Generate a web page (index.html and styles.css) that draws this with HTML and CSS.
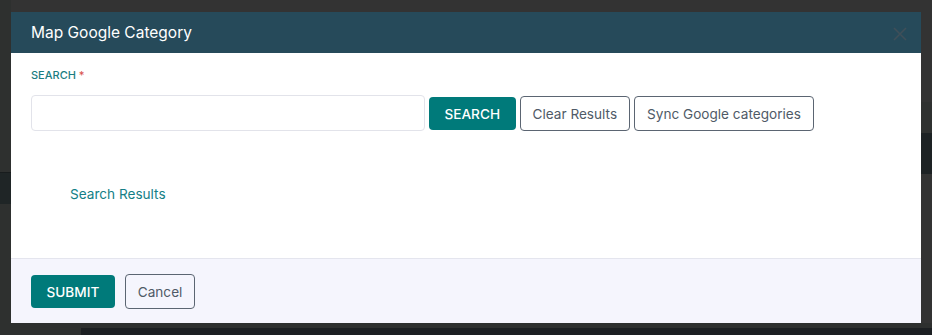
FILE: index.html
```html
<!DOCTYPE html>
<html lang="en">
<head>
  <meta charset="UTF-8" />
  <title>Map Google Category</title>
  <link rel="stylesheet" href="styles.css">
</head>
<body>

  <!-- page underneath the overlay -->
  <div class="backdrop">
    <div class="bd-left"></div>
    <div class="bd-left-band"></div>
    <div class="bd-right"></div>
    <div class="bd-right-band"></div>
    <div class="bd-bottom"></div>
    <div class="bd-bottom-dark"></div>
  </div>

  <!-- Modal -->
  <div class="modal">
    <div class="modal-header">
      <h2>Map Google Category</h2>
      <button class="close-btn" aria-label="Close">
        <svg width="14" height="14" viewBox="0 0 14 14">
          <path d="M1 1L13 13M13 1L1 13" stroke="#3f4f59" stroke-width="1.6" fill="none"/>
        </svg>
      </button>
    </div>

    <div class="modal-body">
      <label class="field-label" for="search">Search <span class="req">*</span></label>
      <div class="search-row">
        <input type="text" id="search" class="search-input">
        <button class="btn btn-primary">SEARCH</button>
        <button class="btn btn-outline">Clear Results</button>
        <button class="btn btn-outline">Sync Google categories</button>
      </div>
      <div class="results-title">Search Results</div>
    </div>

    <div class="modal-footer">
      <button class="btn btn-primary">SUBMIT</button>
      <button class="btn btn-outline">Cancel</button>
    </div>
  </div>

</body>
</html>
```

FILE: styles.css
```css
* { margin: 0; padding: 0; box-sizing: border-box; font-family: 'Inter', 'Liberation Sans', sans-serif; }

body {
  width: 932px;
  height: 335px;
  background: #333333;
  overflow: hidden;
  position: relative;
}

/* dimmed page behind the modal */
.backdrop div { position: absolute; }
.bd-left { left: 0; top: 0; width: 11px; height: 335px; background: #2e302f; }
.bd-left-band { left: 0; top: 172px; width: 11px; height: 32px; background: #1f2526; border-top: 1px solid #181c1d; }
.bd-right { left: 921px; top: 102px; width: 11px; height: 31px; background: #2f3130; }
.bd-right-band { left: 921px; top: 133px; width: 11px; height: 41px; background: #1d2224; }
.bd-bottom { left: 0; top: 323px; width: 932px; height: 12px; background: #2e302f; }
.bd-bottom-dark { left: 81px; top: 328px; width: 851px; height: 7px; background: #1c1f22; }

.modal {
  position: absolute;
  top: 12px;
  left: 11px;
  width: 910px;
  height: 311px;
  background: #fff;
  display: flex;
  flex-direction: column;
}

.modal-header {
  height: 41px;
  background: #264a5a;
  display: flex;
  align-items: center;
  justify-content: space-between;
  padding: 0 14px 0 20px;
}

.modal-header h2 {
  color: #fff;
  font-size: 15.5px;
  font-weight: 400;
}

.close-btn {
  background: none;
  border: none;
  display: flex;
  margin-top: 2px;
}

.modal-body {
  flex: 1;
  padding: 14px 20px 0;
}

.field-label {
  display: block;
  font-size: 11px;
  line-height: 16px;
  font-weight: 500;
  color: #1b7d82;
  text-transform: uppercase;
}
.field-label .req { color: #d9534f; }

.search-row {
  display: flex;
  align-items: center;
  gap: 4px;
  margin-top: 12px;
}

.search-input {
  width: 394px;
  height: 36px;
  border: 1px solid #e2e3ea;
  border-radius: 4px;
  outline: none;
  padding: 0 10px;
  font-size: 14px;
}

.btn {
  font-size: 13.6px;
  border-radius: 4px;
  cursor: pointer;
  white-space: nowrap;
}

.btn-primary {
  height: 33px;
  padding: 1px 15.5px 0;
  background: #007a7a;
  color: #fff;
  border: none;
  font-weight: 500;
}

.btn-outline {
  height: 35px;
  padding: 1px 12px 0;
  background: #fff;
  color: #4f5a67;
  border: 1px solid #5b6572;
}

.results-title {
  margin: 53px 0 0 39px;
  font-size: 13.6px;
  line-height: 20px;
  color: #147f86;
}

.modal-footer {
  height: 65px;
  border-top: 1px solid #e4e5ee;
  background: #f5f5fd;
  display: flex;
  align-items: center;
  gap: 10px;
  padding: 0 20px;
}
.modal-footer .btn-outline { background: #f5f5fd; }
```
